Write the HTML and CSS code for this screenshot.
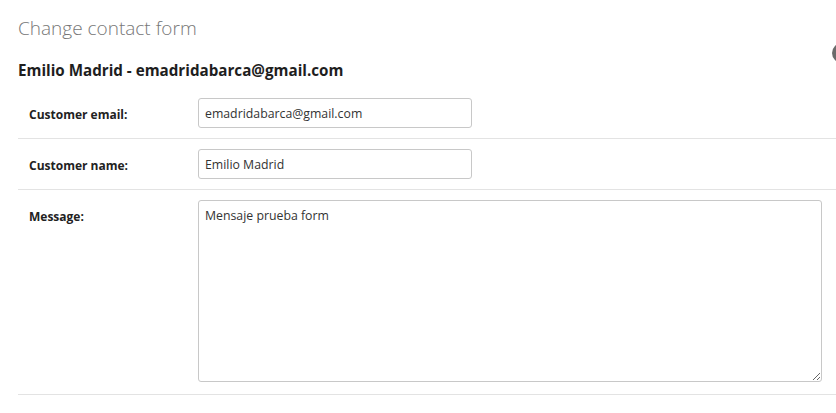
FILE: index.html
```html
<!DOCTYPE html>
<html>
<head>
<meta charset="utf-8">
<link rel="stylesheet" href="styles.css">
</head>
<body>
<div class="page">
  <h1 class="title">Change contact form</h1>
  <h2 class="subtitle">Emilio Madrid - emadridabarca@gmail.com</h2>
  <div class="form">
    <div class="row">
      <label class="label">Customer email:</label>
      <div class="field"><input class="input" type="text" value="emadridabarca@gmail.com"></div>
    </div>
    <div class="row">
      <label class="label">Customer name:</label>
      <div class="field"><input class="input" type="text" value="Emilio Madrid"></div>
    </div>
    <div class="row">
      <label class="label">Message:</label>
      <div class="field"><textarea class="textarea">Mensaje prueba form</textarea></div>
    </div>
  </div>
</div>
<div class="edge-dot"></div>
</body>
</html>
```
FILE: styles.css
```css
html, body {
  margin: 0;
  padding: 0;
  background: #fff;
  overflow: hidden;
}
body {
  font-family: "Open Sans", "Noto Sans", sans-serif;
  color: #222;
  width: 836px;
  height: 413px;
  position: relative;
}
.page {
  padding: 14px 0 0 18px;
}
.title {
  margin: 0;
  font-size: 19px;
  font-weight: 300;
  color: #777;
  line-height: 28px;
}
.subtitle {
  margin: 17px 0 0 0;
  font-size: 15.2px;
  font-weight: 700;
  color: #1e1e1e;
  line-height: 22px;
}
.form {
  margin-top: 7px;
}
.row {
  display: flex;
  align-items: flex-start;
  padding: 10px 0 10px 11px;
  border-bottom: 1px solid #e3e3e3;
}
.label {
  box-sizing: border-box;
  width: 169px;
  height: 30px;
  padding-top: 4px;
  font-size: 12px;
  font-weight: 700;
  color: #222;
  line-height: 26px;
}
.input {
  box-sizing: border-box;
  width: 274px;
  height: 30px;
  border: 1px solid #c8c8c8;
  border-radius: 3px;
  padding: 0 6px;
  font-family: "Open Sans", "Noto Sans", sans-serif;
  font-size: 12.3px;
  color: #333;
  outline: none;
}
.textarea {
  display: block;
  box-sizing: border-box;
  width: 624px;
  height: 182px;
  border: 1px solid #c8c8c8;
  border-radius: 3px;
  padding: 6px 6px;
  font-family: "Open Sans", "Noto Sans", sans-serif;
  font-size: 12.3px;
  color: #333;
  resize: vertical;
  outline: none;
}
.row:last-child .field {
  padding-bottom: 2px;
}
.edge-dot {
  position: absolute;
  left: 832px;
  top: 43px;
  width: 20px;
  height: 20px;
  border-radius: 50%;
  background: #6b6b6b;
}
```
